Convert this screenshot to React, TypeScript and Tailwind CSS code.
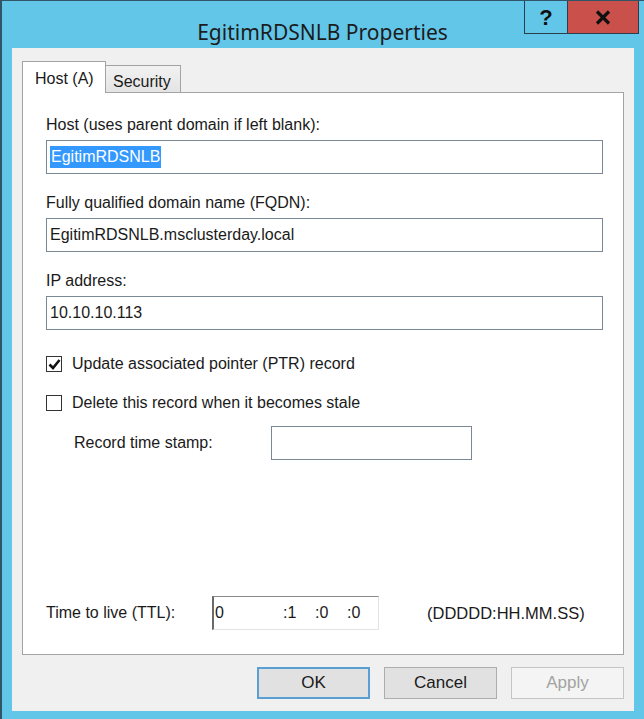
import React from "react"

const ui = { fontFamily: '"Liberation Sans", Arial, sans-serif' }

function TextBox({ children, className = "" }: { children?: React.ReactNode; className?: string }) {
  return (
    <div className={`h-[34px] border border-[#7a8896] bg-white flex items-center pl-[3px] text-[16px] text-[#1a1a1a] ${className}`}>
      {children}
    </div>
  )
}

function CheckBox({ checked }: { checked?: boolean }) {
  return (
    <div className="w-[16px] h-[16px] border border-[#333] bg-white flex items-center justify-center shrink-0">
      {checked && (
        <svg width="13" height="12" viewBox="0 0 13 12">
          <path d="M1.5 6.5 L5 10 L11.5 2" fill="none" stroke="#111" strokeWidth="2.6" />
        </svg>
      )}
    </div>
  )
}

export default function App() {
  return (
    <div
      className="w-[644px] h-[719px] bg-[#62c6e9] border-l-2 border-t border-[#2f5566] flex flex-col overflow-hidden"
      style={ui}
    >
      {/* Title bar */}
      <div className="h-[47px] flex items-start shrink-0">
        <div className="w-[119px]" />
        <div
          className="flex-1 text-center pt-[18px] text-[21px] leading-[26px] text-[#1c1c1c]"
          style={{ fontFamily: '"Noto Sans", "Open Sans", sans-serif' }}
        >
          EgitimRDSNLB Properties
        </div>
        <div className="flex h-[34px] mr-[5px] -mt-px border border-[#2c3e4c]">
          <div className="w-[42px] flex items-center justify-center text-[22px] font-bold text-[#111]">?</div>
          <div className="w-[71px] bg-[#c9504b] border-l border-[#2c3e4c] flex items-center justify-center">
            <svg width="16" height="15" viewBox="0 0 16 15">
              <path d="M2 1.5 L14 13.5 M14 1.5 L2 13.5" stroke="#111" strokeWidth="3.2" />
            </svg>
          </div>
        </div>
      </div>

      {/* Client area */}
      <div className="flex-1 ml-[10px] mr-[10px] mb-[8px] bg-[#f0f0f0] flex flex-col pl-[10px] pr-[10px] pt-[13px] pb-[12px]">
        {/* Tabs */}
        <div className="flex items-end h-[31px] text-[16px] text-[#1a1a1a]">
          <div className="w-[84px] h-[32px] -mb-px z-10 bg-white border border-b-0 border-[#a3a3a3] pl-[12px] pt-[5px]">
            Host (A)
          </div>
          <div className="w-[75px] h-[27px] bg-gradient-to-b from-[#f2f2f2] to-[#e4e4e4] border-t border-r border-[#a3a3a3] pl-[7px] pt-[4px]">
            Security
          </div>
        </div>

        {/* Panel */}
        <div className="h-[563px] bg-white border border-[#a3a3a3] flex flex-col pl-[23px] pr-[20px] pb-[24px] text-[16px] text-[#1a1a1a]">
          <div className="mt-[22px] leading-[20px]">Host (uses parent domain if left blank):</div>
          <TextBox className="mt-[5px]">
            <span className="bg-[#3399ff] text-white leading-[22px] px-[1px]">EgitimRDSNLB</span>
          </TextBox>

          <div className="mt-[19px] leading-[20px]">Fully qualified domain name (FQDN):</div>
          <TextBox className="mt-[5px]">EgitimRDSNLB.msclusterday.local</TextBox>

          <div className="mt-[19px] leading-[20px]">IP address:</div>
          <TextBox className="mt-[5px]">10.10.10.113</TextBox>

          <div className="mt-[24px] h-[20px] flex items-center gap-[10px]">
            <CheckBox checked />
            <span>Update associated pointer (PTR) record</span>
          </div>

          <div className="mt-[19px] h-[20px] flex items-center gap-[10px]">
            <CheckBox />
            <span>Delete this record when it becomes stale</span>
          </div>

          <div className="mt-[13px] h-[34px] flex items-center pl-[28px]">
            <span className="w-[197px]">Record time stamp:</span>
            <TextBox className="w-[201px]" />
          </div>

          <div className="flex-1" />

          <div className="h-[34px] flex items-center">
            <span className="w-[166px]">Time to live (TTL):</span>
            <div className="w-[167px] h-[34px] bg-white border-l-2 border-t border-r border-b border-l-[#6a6a6a] border-t-[#8a8a8a] border-r-[#e3e3e3] border-b-[#e3e3e3] flex items-center pl-[1px]">
              <span className="w-[68px]">0</span>
              <span className="w-[32px]">:1</span>
              <span className="w-[32px]">:0</span>
              <span>:0</span>
            </div>
            <span className="ml-[48px] text-[16.5px]">(DDDDD:HH.MM.SS)</span>
          </div>
        </div>

        {/* Buttons */}
        <div className="mt-[12px] flex justify-end gap-[14px] text-[17px]">
          <div className="w-[113px] h-[32px] bg-[#e1e1e1] border-2 border-[#5a9fd4] flex items-center justify-center text-[#1a1a1a]">
            OK
          </div>
          <div className="w-[113px] h-[32px] bg-[#e1e1e1] border border-[#adadad] flex items-center justify-center text-[#1a1a1a]">
            Cancel
          </div>
          <div className="w-[113px] h-[32px] bg-[#f4f4f4] border border-[#c4c4c4] flex items-center justify-center text-[#a3a3a3]">
            Apply
          </div>
        </div>
      </div>
    </div>
  )
}
